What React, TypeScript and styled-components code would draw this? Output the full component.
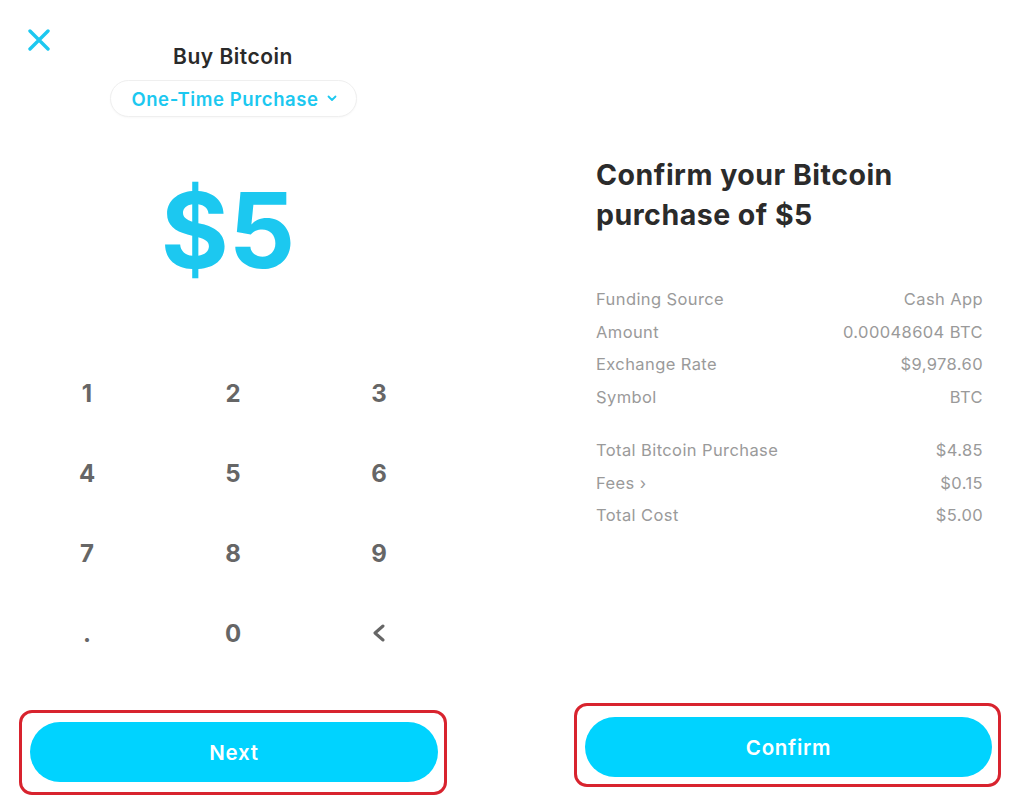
import React from "react";
import styled, { createGlobalStyle } from "styled-components";

const Global = createGlobalStyle`
  html, body { margin: 0; padding: 0; background: #ffffff; }
  body { font-family: "Inter", "Lato", "Noto Sans", sans-serif; }
  * { box-sizing: border-box; }
`;

const CYAN = "#1cc8f0";
const BTN = "#00d3ff";

const Page = styled.div`
  width: 1024px;
  height: 807px;
  display: grid;
  grid-template-columns: 466px 1fr;
  overflow: hidden;
`;

const Column = styled.section`
  height: 807px;
  display: flex;
  flex-direction: column;
`;

const Header = styled.header`
  display: grid;
  grid-template-columns: 1fr auto 1fr;
  padding: 29px 0 0 28px;
`;

const CloseBtn = styled.button`
  justify-self: start;
  width: 22px;
  height: 22px;
  padding: 0;
  border: none;
  background: none;
  display: flex;
`;

const Title = styled.h1`
  margin: 16px 0 0 -28px;
  font-size: 21px;
  line-height: 24px;
  font-weight: 600;
  color: #2a2a2a;
  letter-spacing: 0.5px;
`;

const Pill = styled.button`
  align-self: center;
  margin: 11px 0 0 0;
  height: 37px;
  width: 247px;
  border: 1px solid #efefef;
  border-radius: 19px;
  background: #fff;
  display: flex;
  align-items: center;
  justify-content: center;
  gap: 8px;
  font-family: inherit;
  font-size: 18.5px;
  font-weight: 600;
  letter-spacing: 0.6px;
  color: ${CYAN};
  padding: 0 0 0 2px;
  box-shadow: 0 1px 2px rgba(0, 0, 0, 0.03);
`;

const Amount = styled.div`
  align-self: center;
  margin: 61px 0 0 -10px;
  font-size: 104px;
  line-height: 104px;
  font-weight: 700;
  letter-spacing: 0px;
  color: ${CYAN};
`;

const Keypad = styled.div`
  margin: 71px 14px 0 14px;
  display: grid;
  grid-template-columns: repeat(3, 146px);
  grid-auto-rows: 80px;
`;

const Key = styled.div`
  display: flex;
  align-items: center;
  justify-content: center;
  font-size: 24px;
  font-weight: 700;
  color: #666666;
`;

const Outline = styled.div<{ $ml: number; $mr: number; $mb: number; $pt: number; $pb: number }>`
  margin: auto ${(p) => p.$mr}px ${(p) => p.$mb}px ${(p) => p.$ml}px;
  border: 3px solid #d8232e;
  border-radius: 13px;
  padding: ${(p) => p.$pt}px 6px ${(p) => p.$pb}px 8px;
`;

const CTA = styled.button`
  width: 100%;
  height: 60px;
  border: none;
  border-radius: 30px;
  background: ${BTN};
  color: #ffffff;
  font-family: inherit;
  font-size: 20.5px;
  font-weight: 600;
  letter-spacing: 0.7px;
`;

const Confirm = styled.h2`
  margin: 155px 30px 0 130px;
  font-size: 28.5px;
  line-height: 40px;
  font-weight: 700;
  color: #2b2b2b;
  letter-spacing: 0.5px;
`;

const Details = styled.div<{ $mt: number }>`
  margin: ${(p) => p.$mt}px 41px 0 130px;
  display: flex;
  flex-direction: column;
`;

const Row = styled.div`
  height: 32.5px;
  display: flex;
  align-items: center;
  justify-content: space-between;
  font-size: 16.5px;
  letter-spacing: 0.4px;
  color: #9a9a9a;
`;

const XIcon = () => (
  <svg width="22" height="22" viewBox="0 0 22 22">
    <path d="M2 2 L20 20 M20 2 L2 20" stroke={CYAN} strokeWidth="3.4" strokeLinecap="round" />
  </svg>
);

const Chevron = () => (
  <svg width="10" height="7" viewBox="0 0 10 7">
    <path d="M1.5 1.5 L5 5 L8.5 1.5" fill="none" stroke={CYAN} strokeWidth="1.8" strokeLinecap="round" strokeLinejoin="round" />
  </svg>
);

const BackIcon = () => (
  <svg width="14" height="18" viewBox="0 0 14 18">
    <path d="M11 2 L3 9 L11 16" fill="none" stroke="#666" strokeWidth="3" strokeLinecap="round" strokeLinejoin="round" />
  </svg>
);

const keys: React.ReactNode[] = ["1", "2", "3", "4", "5", "6", "7", "8", "9", ".", "0", <BackIcon key="b" />];

const group1 = [
  ["Funding Source", "Cash App"],
  ["Amount", "0.00048604 BTC"],
  ["Exchange Rate", "$9,978.60"],
  ["Symbol", "BTC"],
];
const group2 = [
  ["Total Bitcoin Purchase", "$4.85"],
  ["Fees \u203A", "$0.15"],
  ["Total Cost", "$5.00"],
];

export default function App() {
  return (
    <>
      <Global />
      <Page>
        <Column>
          <Header>
            <CloseBtn aria-label="Close">
              <XIcon />
            </CloseBtn>
            <Title>Buy Bitcoin</Title>
            <span />
          </Header>
          <Pill>
            One-Time Purchase <Chevron />
          </Pill>
          <Amount>$5</Amount>
          <Keypad>
            {keys.map((k, i) => (
              <Key key={i}>{k}</Key>
            ))}
          </Keypad>
          <Outline $ml={19} $mr={19} $mb={12} $pt={9} $pb={10}>
            <CTA>Next</CTA>
          </Outline>
        </Column>
        <Column>
          <Confirm>
            Confirm your Bitcoin
            <br />
            purchase of $5
          </Confirm>
          <Details $mt={48}>
            {group1.map(([l, v]) => (
              <Row key={l}>
                <span>{l}</span>
                <span>{v}</span>
              </Row>
            ))}
          </Details>
          <Details $mt={21}>
            {group2.map(([l, v]) => (
              <Row key={l}>
                <span>{l}</span>
                <span>{v}</span>
              </Row>
            ))}
          </Details>
          <Outline $ml={108} $mr={23} $mb={20} $pt={11} $pb={7}>
            <CTA>Confirm</CTA>
          </Outline>
        </Column>
      </Page>
    </>
  );
}
